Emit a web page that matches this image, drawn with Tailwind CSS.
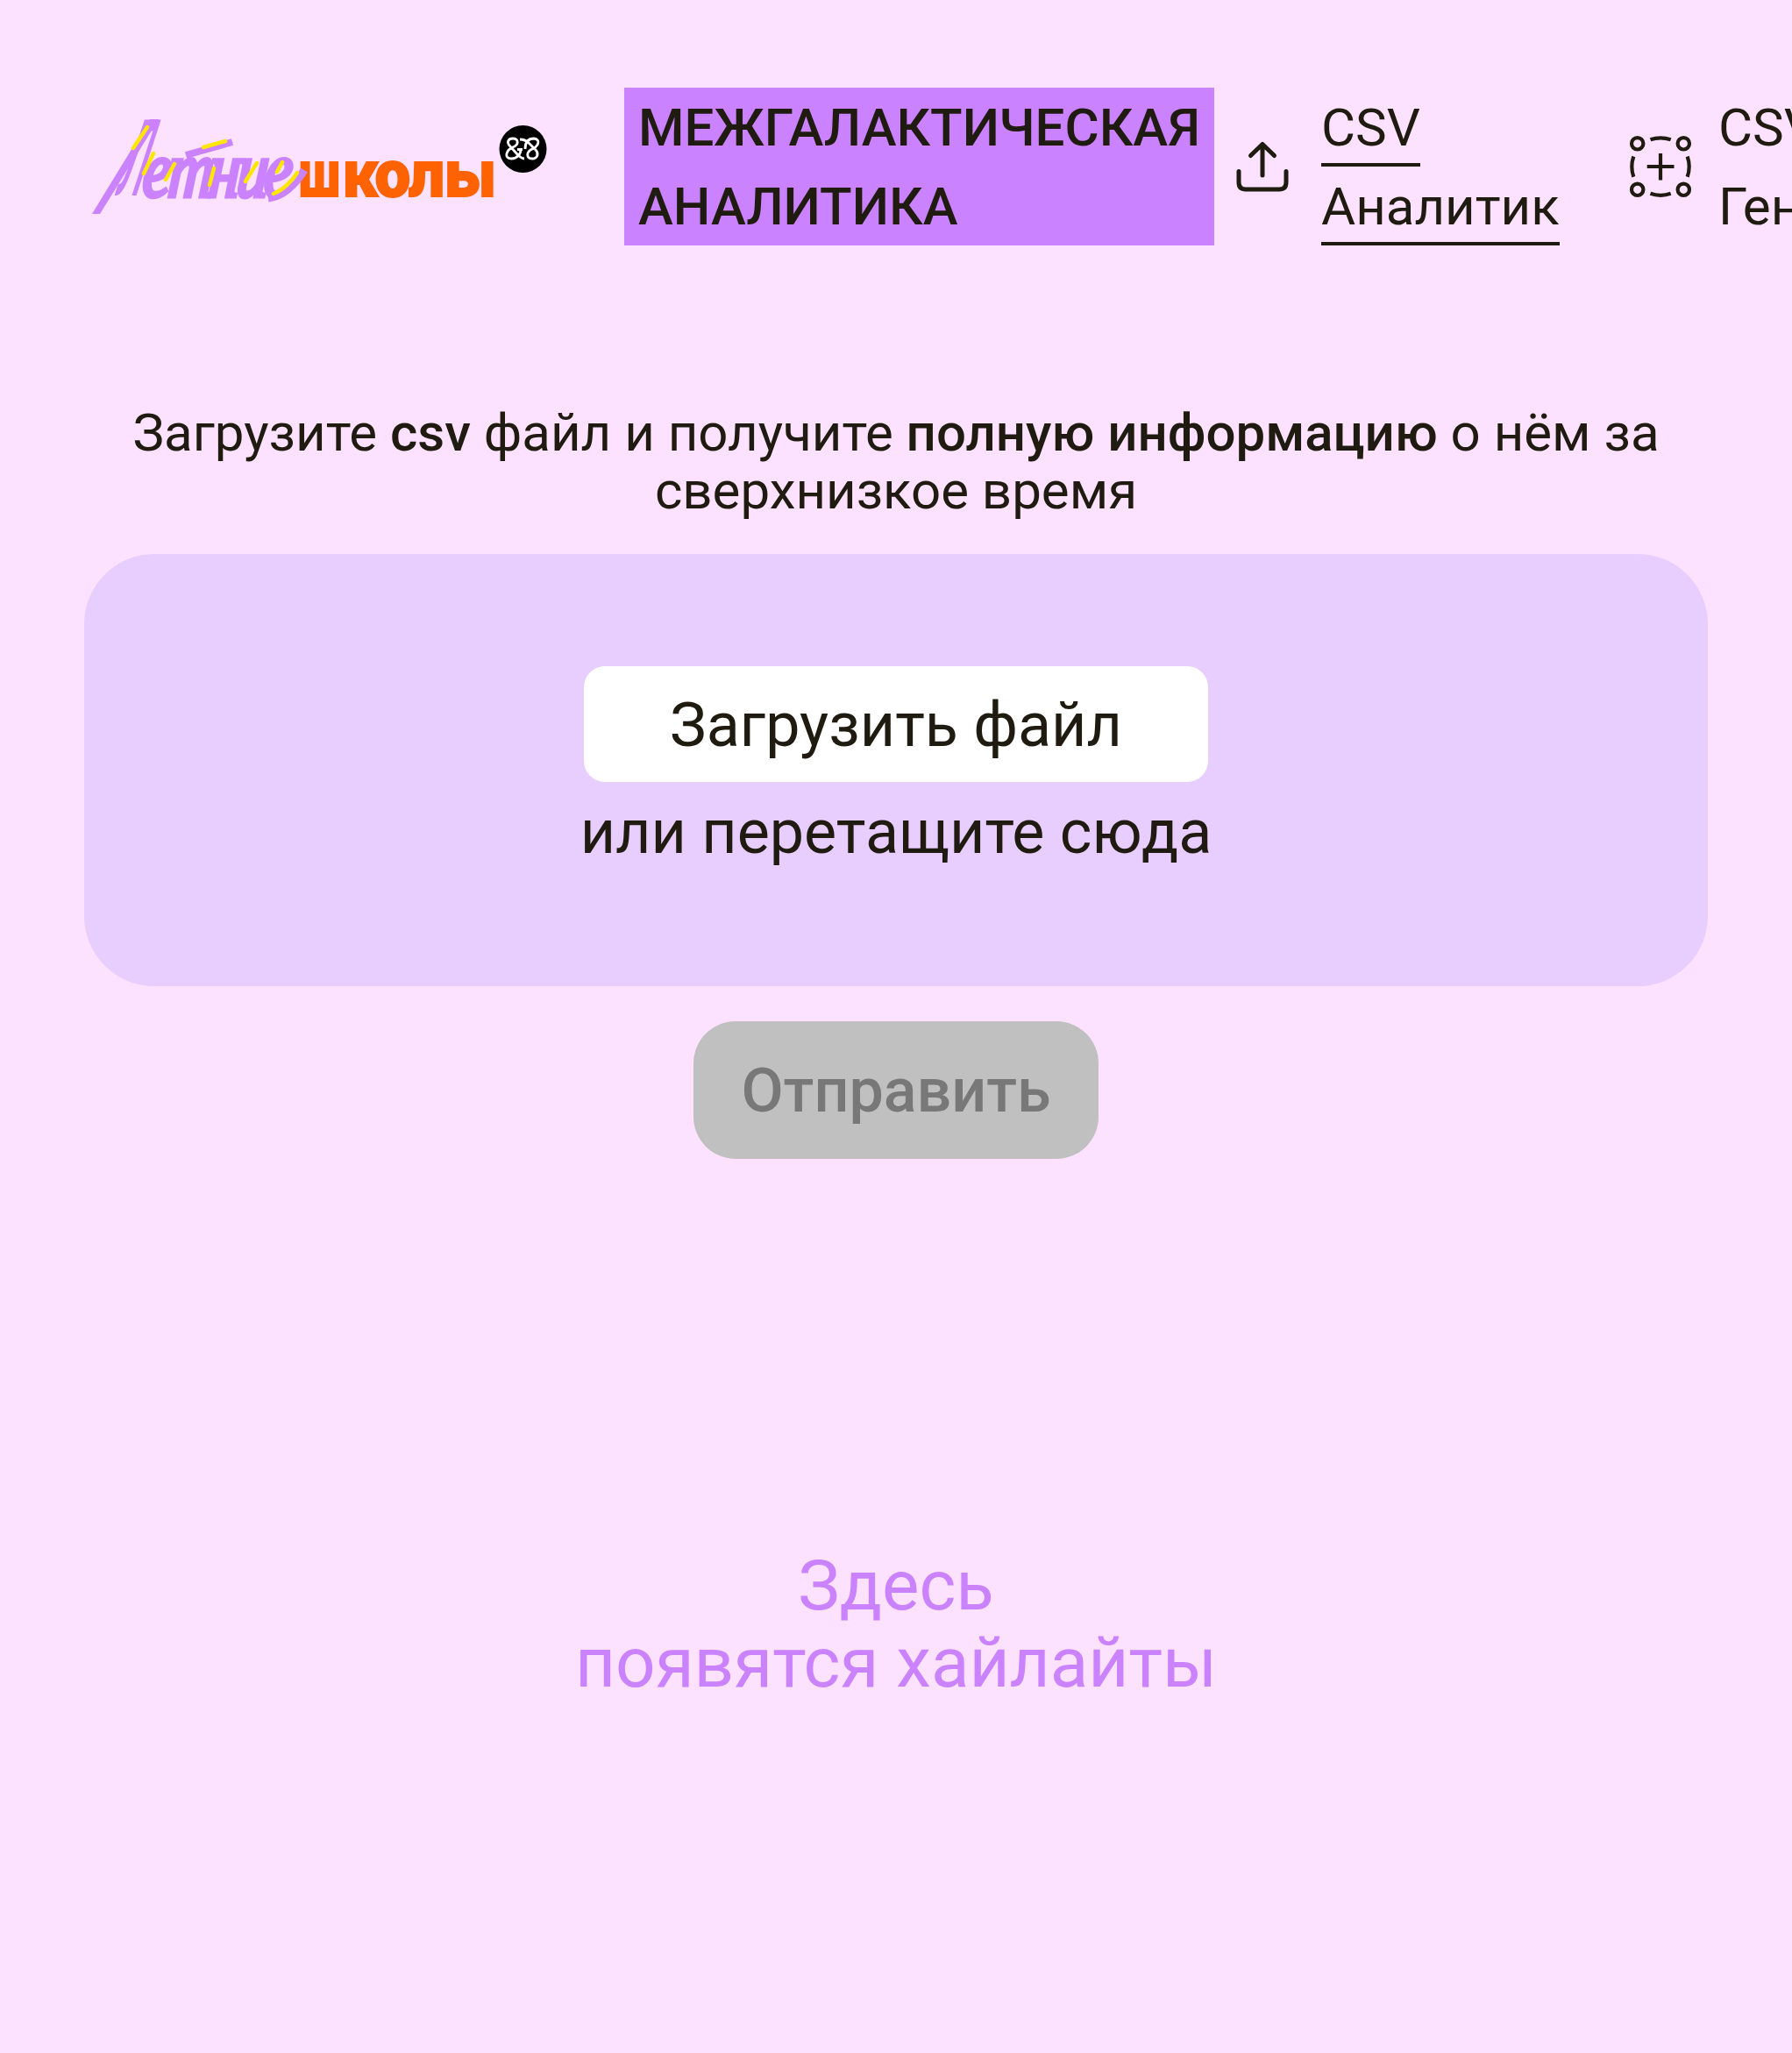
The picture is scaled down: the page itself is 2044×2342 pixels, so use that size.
<!DOCTYPE html>
<html lang="ru">
<head>
<meta charset="utf-8">
<title>Межгалактическая аналитика</title>
<script src="https://cdn.jsdelivr.net/npm/@tailwindcss/browser@4"></script>
</head>
<body class="h-[2342px] overflow-hidden bg-[#fce2ff] font-[Roboto,sans-serif] text-[60px] text-[#201b10]">
<header class="flex h-[380px] w-full items-start overflow-hidden pt-[100px] pl-24">
  <svg class="mt-5 h-[140px] w-[536px] shrink-0" viewBox="96 120 536 140" role="img" aria-label="Летние школы">
    <!-- orange wordmark -->
    <g font-family="Inter, sans-serif" font-weight="900" font-size="76" fill="#ff6200">
      <text transform="translate(340 225) scale(.72 1)">ш</text>
      <text transform="translate(0 225) scale(.9 1)" x="434 474 517 563">колы</text>
    </g>
    <!-- script wordmark with its swashes -->
    <g fill="none" stroke="#cb82ff" stroke-width="9">
      <path d="M105 244 171 136H181L114 244Z" fill="#cb82ff" stroke="none"/>
      <path d="M212 177 265 162" stroke-width="8"/>
      <path d="M306 226C322 224 337 211 347 194"/>
    </g>
    <g fill="#cb82ff" stroke="#cb82ff">
      <text transform="translate(131 221) skewX(-18) scale(.34 1)" font-family="Roboto, sans-serif" font-size="116" stroke-width="4">Л</text>
      <text transform="translate(0 224) skewX(-4) scale(.8 1)" font-family="Liberation Serif, serif" font-style="italic" font-size="90" stroke-width="5" x="202 238 296 336 375">етние</text>
    </g>
    <g fill="none" stroke="#ffe600" stroke-width="4.500" stroke-linecap="round">
      <path d="M152 169 168 145M232 168 257 161M164 198 175 175M189 205 199 187M239 211 244 192M280 207 293 186M316 196 322 185M312 221C322 217 333 207 339 197"/>
    </g>
    <circle cx="596.500" cy="170" r="27" fill="#000"/>
    <g fill="none" stroke="#fff" stroke-width="2.800">
      <path d="M598 181C595 181 592 178 590 176L582 167C577 162 580 158 585 158C591 158 592 164 587 167C576 171 575 181 583 181C590 181 594 176 594 170M590 170.500H596"/>
      <path d="M593 159C596 159 600 160 603 163L611 171C615 175 613 181 607 181C601 181 600 175 605 171C615 167 617 159 609 158C602 158 599 163 599 170"/>
    </g>
  </svg>
  <h1 class="ml-20 h-[180px] w-[673px] shrink-0 bg-[#cb82ff] px-4 pt-px leading-[90px] font-medium uppercase">Межгалактическая аналитика</h1>
  <nav class="flex h-[180px] items-center leading-[90px]">
    <svg class="ml-[15px] size-20 shrink-0" viewBox="1400 150 80 80" fill="none" stroke="#201b10" stroke-width="5" stroke-linecap="round" stroke-linejoin="round">
      <path d="M1440 200V164.500M1426.500 177.500 1440 164.500 1453.500 177.500M1413 195.500V208Q1413 216 1421 216H1459Q1467 216 1467 208V195.500"/>
    </svg>
    <a class="ml-[27px] w-[280px] shrink-0 pt-0.5"><span class="border-b-4 border-[#201b10] pb-[5px]">CSV Аналитик</span></a>
    <svg class="ml-[67px] size-20 shrink-0" viewBox="1854 150 80 80" fill="none" stroke="#201b10" stroke-width="4.200">
      <circle cx="1867.700" cy="163.800" r="6.700"/><circle cx="1920.300" cy="163.800" r="6.700"/><circle cx="1867.700" cy="216.300" r="6.700"/><circle cx="1920.300" cy="216.300" r="6.700"/>
      <path d="M1882.500 159.300Q1894 155.300 1905.700 159.300M1882.500 220.800Q1894 224.800 1905.700 220.800M1863.300 178.500Q1859.300 190 1863.300 201.700M1924.700 178.500Q1928.700 190 1924.700 201.700M1894 175V205.500M1878.700 190H1909.500"/>
    </svg>
    <a class="ml-[26px] w-[300px] shrink-0 pt-0.5">CSV Генератор</a>
  </nav>
</header>
<main class="flex flex-col items-center px-24">
  <p class="mt-20 h-[132px] w-full px-8 pt-px text-center leading-[66px]">Загрузите <b class="font-medium">csv</b> файл и получите <b class="font-medium">полную информацию</b> о нём за сверхнизкое время</p>
  <section class="mt-10 flex h-[493px] w-full flex-col items-center rounded-[80px] bg-[#e8cdff] pt-32 text-[70px]">
    <button class="h-[132px] w-[712px] rounded-3xl bg-white pt-0.5">Загрузить файл</button>
    <p class="mt-[5px] leading-[105px]">или перетащите сюда</p>
  </section>
  <button class="mt-10 h-[157px] w-[462px] rounded-[48px] bg-[#c0c0c0] pt-0.5 text-[70px] font-medium text-[#787878]">Отправить</button>
  <p class="mt-[443px] text-center text-[80px] leading-[88px] text-[#cb82ff]">Здесь<br>появятся хайлайты</p>
</main>
</body>
</html>
